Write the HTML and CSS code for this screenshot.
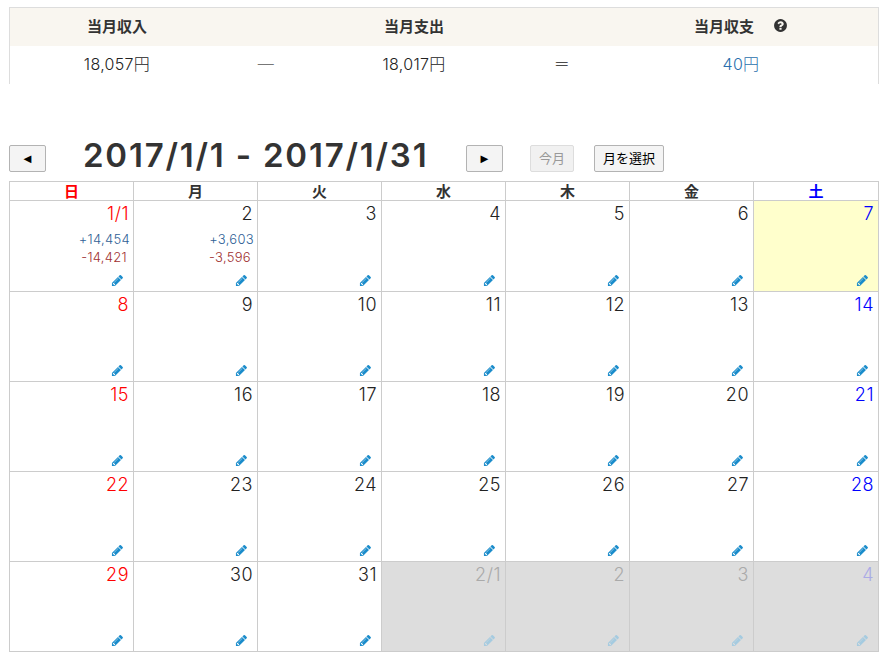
FILE: index.html
```html
<!DOCTYPE html>
<html lang="ja">
<head>
<meta charset="utf-8">
<title>カレンダー</title>
<link rel="stylesheet" href="styles.css">
</head>
<body>
<svg class="defs" width="0" height="0" aria-hidden="true">
  <symbol id="pencil" viewBox="0 0 1792 1792"><path d="M491 1536l91-91-235-235-91 91v107h128v128h107zm523-928q0-22-22-22-10 0-17 7l-542 542q-7 7-7 17 0 22 22 22 10 0 17-7l542-542q7-7 7-17zm-54-192l416 416-832 832h-416v-416zm683 96q0 53-37 90l-166 166-416-416 166-165q36-38 90-38 53 0 91 38l235 234q37 39 37 91z"/></symbol>
</svg>
<section class="summary">
  <div class="sum-head sum-c1">当月収入</div>
  <div class="sum-head sum-c2"></div>
  <div class="sum-head sum-c3">当月支出</div>
  <div class="sum-head sum-c4"></div>
  <div class="sum-head sum-c5">当月収支<svg class="help" viewBox="0 0 1792 1792"><path d="M1024 1376v-192q0-14-9-23t-23-9h-192q-14 0-23 9t-9 23v192q0 14 9 23t23 9h192q14 0 23-9t9-23zm256-672q0-88-55.500-163t-138.500-116-170-41q-243 0-371 213-15 24 8 42l132 100q7 6 19 6 16 0 25-12 53-68 86-92 34-24 86-24 48 0 85.500 26t37.500 59q0 38-20 61t-68 45q-63 28-115.500 86.500t-52.500 125.500v36q0 14 9 23t23 9h192q14 0 23-9t9-23q0-19 21.500-49.500t54.500-49.500q32-18 49-28.500t46-35 44.500-48 28-60.500 12.500-81zm384 192q0 209-103 385.500t-279.500 279.500-385.500 103-385.500-103-279.500-279.500-103-385.500 103-385.500 279.500-279.500 385.500-103 385.500 103 279.500 279.500 103 385.500z"/></svg></div>
  <div class="sum-val">18,057円</div>
  <div class="sum-val sum-op">—</div>
  <div class="sum-val">18,017円</div>
  <div class="sum-val">＝</div>
  <div class="sum-val sum-total">40円</div>
</section>

<div class="toolbar">
  <button class="btn btn-arrow" type="button">◄</button>
  <h2 class="range">2017/1/1 - 2017/1/31</h2>
  <button class="btn btn-arrow" type="button">►</button>
  <button class="btn btn-today" type="button" disabled>今月</button>
  <button class="btn btn-month" type="button">月を選択</button>
</div>

<div class="calendar">
  <div class="dow sun">日</div><div class="dow">月</div><div class="dow">火</div><div class="dow">水</div><div class="dow">木</div><div class="dow">金</div><div class="dow sat">土</div>

  <div class="day sun"><span class="num">1/1</span><span class="inc">+14,454</span><span class="exp">-14,421</span><svg class="edit"><use href="#pencil"/></svg></div>
  <div class="day"><span class="num">2</span><span class="inc">+3,603</span><span class="exp">-3,596</span><svg class="edit"><use href="#pencil"/></svg></div>
  <div class="day"><span class="num">3</span><svg class="edit"><use href="#pencil"/></svg></div>
  <div class="day"><span class="num">4</span><svg class="edit"><use href="#pencil"/></svg></div>
  <div class="day"><span class="num">5</span><svg class="edit"><use href="#pencil"/></svg></div>
  <div class="day"><span class="num">6</span><svg class="edit"><use href="#pencil"/></svg></div>
  <div class="day sat today"><span class="num">7</span><svg class="edit"><use href="#pencil"/></svg></div>

  <div class="day sun"><span class="num">8</span><svg class="edit"><use href="#pencil"/></svg></div>
  <div class="day"><span class="num">9</span><svg class="edit"><use href="#pencil"/></svg></div>
  <div class="day"><span class="num">10</span><svg class="edit"><use href="#pencil"/></svg></div>
  <div class="day"><span class="num">11</span><svg class="edit"><use href="#pencil"/></svg></div>
  <div class="day"><span class="num">12</span><svg class="edit"><use href="#pencil"/></svg></div>
  <div class="day"><span class="num">13</span><svg class="edit"><use href="#pencil"/></svg></div>
  <div class="day sat"><span class="num">14</span><svg class="edit"><use href="#pencil"/></svg></div>

  <div class="day sun"><span class="num">15</span><svg class="edit"><use href="#pencil"/></svg></div>
  <div class="day"><span class="num">16</span><svg class="edit"><use href="#pencil"/></svg></div>
  <div class="day"><span class="num">17</span><svg class="edit"><use href="#pencil"/></svg></div>
  <div class="day"><span class="num">18</span><svg class="edit"><use href="#pencil"/></svg></div>
  <div class="day"><span class="num">19</span><svg class="edit"><use href="#pencil"/></svg></div>
  <div class="day"><span class="num">20</span><svg class="edit"><use href="#pencil"/></svg></div>
  <div class="day sat"><span class="num">21</span><svg class="edit"><use href="#pencil"/></svg></div>

  <div class="day sun"><span class="num">22</span><svg class="edit"><use href="#pencil"/></svg></div>
  <div class="day"><span class="num">23</span><svg class="edit"><use href="#pencil"/></svg></div>
  <div class="day"><span class="num">24</span><svg class="edit"><use href="#pencil"/></svg></div>
  <div class="day"><span class="num">25</span><svg class="edit"><use href="#pencil"/></svg></div>
  <div class="day"><span class="num">26</span><svg class="edit"><use href="#pencil"/></svg></div>
  <div class="day"><span class="num">27</span><svg class="edit"><use href="#pencil"/></svg></div>
  <div class="day sat"><span class="num">28</span><svg class="edit"><use href="#pencil"/></svg></div>

  <div class="day sun"><span class="num">29</span><svg class="edit"><use href="#pencil"/></svg></div>
  <div class="day"><span class="num">30</span><svg class="edit"><use href="#pencil"/></svg></div>
  <div class="day"><span class="num">31</span><svg class="edit"><use href="#pencil"/></svg></div>
  <div class="day other"><span class="num">2/1</span><svg class="edit"><use href="#pencil"/></svg></div>
  <div class="day other"><span class="num">2</span><svg class="edit"><use href="#pencil"/></svg></div>
  <div class="day other"><span class="num">3</span><svg class="edit"><use href="#pencil"/></svg></div>
  <div class="day other sat"><span class="num">4</span><svg class="edit"><use href="#pencil"/></svg></div>
</div>
</body>
</html>
```
FILE: styles.css
```css
* { box-sizing: border-box; }

html, body { margin: 0; padding: 0; background: #fff; }

body {
  width: 892px;
  height: 664px;
  overflow: hidden;
  padding: 7px 13px 0 9px;
  color: #222;
  font-family: Inter, "Noto Sans CJK JP", sans-serif;
}

.defs { position: absolute; }

.summary {
  display: grid;
  grid-template-columns: 214px 84px 212px 84px 1fr;
  grid-template-rows: 38px 38px;
  width: 870px;
  border: 1px solid #ddd;
  border-bottom: 0;
}

.sum-head {
  display: flex;
  align-items: center;
  justify-content: center;
  padding-bottom: 4px;
  background: #f9f6f0;
  color: #333;
  font-family: "Noto Sans CJK JP", sans-serif;
  font-size: 15px;
  font-weight: 700;
}

.sum-val {
  display: flex;
  align-items: center;
  justify-content: center;
  padding-bottom: 5px;
  font-size: 16px;
  font-weight: 300;
  letter-spacing: 0.300px;
}

.sum-op { color: #777; }
.sum-total { color: #2a6fad; }

.help { width: 15px; height: 15px; margin-left: 19px; fill: #333; }

.toolbar {
  display: flex;
  align-items: center;
  height: 27px;
  margin-top: 61px;
}

.range {
  margin: 0 39px 0 37px;
  width: 344px;
  padding-bottom: 6px;
  font-size: 33px;
  font-weight: 600;
  line-height: 27px;
  letter-spacing: 1.800px;
  white-space: nowrap;
  color: #333;
}

.btn {
  height: 27px;
  padding: 0 0 3px;
  border: 1px solid #b3b3b3;
  border-radius: 2px;
  background: #f4f4f4;
  color: #000;
  font-family: "Noto Sans CJK JP", sans-serif;
  font-size: 13px;
  line-height: 1;
}

.btn-arrow { width: 37px; font-size: 13px; }

.btn-today {
  width: 44px;
  margin-left: 27px;
  background: #f1f1f1;
  border-color: #ddd;
  color: #999;
}

.btn-month { width: 70px; margin-left: 20px; }

.calendar {
  display: grid;
  grid-template-columns: repeat(6, 124px) 125px;
  grid-template-rows: 19px 91px repeat(4, 90px);
  width: 870px;
  margin-top: 9px;
  border-top: 1px solid #ccc;
  border-left: 1px solid #ccc;
}

.dow, .day {
  border-right: 1px solid #ccc;
  border-bottom: 1px solid #ccc;
}

.dow {
  color: #333;
  font-family: "Noto Sans CJK JP", sans-serif;
  font-size: 15px;
  font-weight: 700;
  line-height: 17px;
  text-align: center;
}

.day {
  display: flex;
  flex-direction: column;
  align-items: flex-end;
  padding: 0 4px 4px 0;
}

.num {
  font-size: 18px;
  font-weight: 300;
  letter-spacing: 0.500px;
  line-height: 25px;
  margin-bottom: 4px;
}

.inc, .exp {
  font-size: 13px;
  font-weight: 300;
  letter-spacing: 0.300px;
  line-height: 18px;
}
.inc { color: #2f5f96; margin-right: -1px; }
.exp { color: #a03030; margin-right: 2px; }

.edit {
  width: 13px;
  height: 13px;
  margin-top: auto;
  margin-right: 5px;
  fill: #1a8ccb;
}

.sun { color: #f00; }
.dow.sun { color: #f00; }
.sat, .dow.sat { color: #00f; }
.today { background: #ffc; }

.other { background: #ddd; color: #aaa; }
.other.sat { color: #aaaae6; }
.other .edit { fill: #a5cbe0; }
```
